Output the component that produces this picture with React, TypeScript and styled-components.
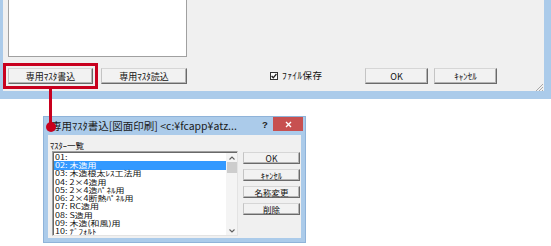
import { FC } from 'react';
import styled, { createGlobalStyle } from 'styled-components';

const GlobalStyle = createGlobalStyle`
  html, body {
    margin: 0;
    padding: 0;
    background: #ffffff;
  }
  body {
    font-family: 'Noto Sans CJK JP', 'Noto Sans', sans-serif;
    color: #000;
  }
  * {
    box-sizing: border-box;
  }
`;

const FRAME = '#abcbea';
const ANNOT = '#c8001e';

const items = [
  '01:',
  '02: 木造用',
  '03: 木造根太ﾚｽ工法用',
  '04: 2×4造用',
  '05: 2×4造ﾊﾟﾈﾙ用',
  '06: 2×4断熱ﾊﾟﾈﾙ用',
  '07: RC造用',
  '08: S造用',
  '09: 木造(和風)用',
  '10: ﾃﾞﾌｫﾙﾄ',
];

const App: FC = () => {
  return (
    <>
      <GlobalStyle />
      <Page>
        <MainWindow>
          <ListPane />
          <ButtonRow>
            <Highlight>
              <WinButton $w={85}>専用ﾏｽﾀ書込</WinButton>
            </Highlight>
            <WinButton $w={86} style={{ marginLeft: 3 }}>
              専用ﾏｽﾀ読込
            </WinButton>
            <CheckGroup>
              <CheckBox>
                <svg width="6" height="6" viewBox="0 0 6 6">
                  <path d="M0.6 3 L2.3 4.8 L5.4 1" fill="none" stroke="#222" strokeWidth="1.3" />
                </svg>
              </CheckBox>
              <SmallText>ﾌｧｲﾙ保存</SmallText>
            </CheckGroup>
            <RightGroup>
              <WinButton $w={63}>OK</WinButton>
              <WinButton $w={63}>ｷｬﾝｾﾙ</WinButton>
            </RightGroup>
          </ButtonRow>
          <Grip>
            <svg width="7" height="7" viewBox="0 0 7 7">
              <path d="M7 0 L0 7 M7 3 L3 7 M7 6 L6 7" stroke="#a8a8a8" strokeWidth="1" />
            </svg>
          </Grip>
        </MainWindow>

        <Connector />
        <Dot />

        <Dialog>
          <TitleBar>
            <TitleText>専用ﾏｽﾀ書込[図面印刷] &lt;c:¥fcapp¥atz...</TitleText>
            <Help>?</Help>
            <CloseButton>
              <svg width="7" height="7" viewBox="0 0 7 7">
                <path d="M1 1 L6 6 M6 1 L1 6" stroke="#fff" strokeWidth="1.4" />
              </svg>
            </CloseButton>
          </TitleBar>
          <Client>
            <Label>ﾏｽﾀｰ一覧</Label>
            <DialogBody>
              <ListBox>
                <Items>
                  {items.map((it, i) => (
                    <Item key={it} $selected={i === 1}>
                      <ItemText>{it}</ItemText>
                    </Item>
                  ))}
                </Items>
                <ScrollBar>
                  <Arrow>
                    <svg width="6" height="4" viewBox="0 0 6 4">
                      <path d="M0.5 3.5 L3 1 L5.5 3.5" fill="none" stroke="#606060" strokeWidth="1.1" />
                    </svg>
                  </Arrow>
                  <Thumb />
                  <Track />
                  <Arrow>
                    <svg width="6" height="4" viewBox="0 0 6 4">
                      <path d="M0.5 0.5 L3 3 L5.5 0.5" fill="none" stroke="#606060" strokeWidth="1.1" />
                    </svg>
                  </Arrow>
                </ScrollBar>
              </ListBox>
              <SideButtons>
                <DlgButton>OK</DlgButton>
                <DlgButton>ｷｬﾝｾﾙ</DlgButton>
                <DlgButton>名称変更</DlgButton>
                <DlgButton>削除</DlgButton>
              </SideButtons>
            </DialogBody>
          </Client>
        </Dialog>
      </Page>
    </>
  );
};

const Page = styled.div`
  position: relative;
  width: 551px;
  height: 246px;
  overflow: hidden;
  background: #fff;
  display: flex;
  flex-direction: column;
`;

const MainWindow = styled.div`
  position: relative;
  height: 99px;
  background: #f0f0f0;
  border-left: 3px solid ${FRAME};
  border-right: 7px solid ${FRAME};
  border-bottom: 8px solid ${FRAME};
  display: flex;
  flex-direction: column;
`;

const ListPane = styled.div`
  margin-left: 5px;
  width: 179px;
  height: 57px;
  background: #fff;
  border: 1px solid #a0a0a0;
  border-top: none;
`;

const ButtonRow = styled.div`
  margin-top: 6px;
  display: flex;
  align-items: center;
`;

const Highlight = styled.div`
  border: 3px solid ${ANNOT};
  padding: 2px;
  display: flex;
`;

const WinButton = styled.div<{ $w: number }>`
  width: ${(p) => p.$w}px;
  height: 16px;
  background: #f2f2f2;
  border-top: 1px solid #d6d6d6;
  border-left: 1px solid #c4c4c4;
  border-right: 1px solid #6a6a6a;
  border-bottom: 1px solid #6a6a6a;
  box-shadow: inset -1px -1px 0 #b4b4b4;
  display: flex;
  align-items: center;
  justify-content: center;
  font-size: 9px;
  line-height: 1;
  color: #111;
`;

const CheckGroup = styled.div`
  margin-left: 83px;
  display: flex;
  align-items: center;
  gap: 4px;
`;

const CheckBox = styled.div`
  width: 8px;
  height: 8px;
  background: #fff;
  border: 1px solid #333;
  display: flex;
  align-items: center;
  justify-content: center;
`;

const SmallText = styled.span`
  font-size: 9.5px;
  line-height: 1;
  letter-spacing: 0.4px;
  color: #111;
`;

const RightGroup = styled.div`
  margin-left: auto;
  margin-right: 47px;
  display: flex;
  gap: 6px;
`;

const Grip = styled.div`
  position: absolute;
  right: 1px;
  bottom: 0;
  width: 7px;
  height: 7px;
  display: flex;
`;

const Connector = styled.div`
  position: absolute;
  left: 49px;
  top: 89px;
  width: 3px;
  height: 36px;
  background: ${ANNOT};
  z-index: 2;
`;

const Dot = styled.div`
  position: absolute;
  left: 46px;
  top: 122px;
  width: 10px;
  height: 10px;
  border-radius: 50%;
  background: ${ANNOT};
  z-index: 2;
`;

const Dialog = styled.div`
  margin-top: 17px;
  margin-left: 43px;
  width: 263px;
  height: 127px;
  background: ${FRAME};
  border: 1px solid #8fb3d9;
  padding: 0 4px 4px 4px;
  display: flex;
  flex-direction: column;
`;

const TitleBar = styled.div`
  height: 18px;
  display: flex;
  align-items: flex-start;
`;

const TitleText = styled.div`
  margin-left: 3px;
  margin-top: 2px;
  font-size: 10.5px;
  line-height: 14px;
  color: #1a1a1a;
  white-space: nowrap;
  flex: 1;
`;

const Help = styled.div`
  margin-top: 2px;
  font-family: 'Liberation Sans', sans-serif;
  font-weight: bold;
  font-size: 9.5px;
  line-height: 12px;
  color: #222;
  width: 11px;
`;

const CloseButton = styled.div`
  width: 30px;
  height: 14px;
  margin-right: -2px;
  background: #c75050;
  display: flex;
  align-items: center;
  justify-content: center;
`;

const Client = styled.div`
  flex: 1;
  background: #f0f0f0;
  padding: 5px 0 0 2px;
  display: flex;
  flex-direction: column;
`;

const Label = styled.div`
  font-size: 8.5px;
  line-height: 10px;
  height: 11px;
  color: #111;
  white-space: nowrap;
`;

const DialogBody = styled.div`
  display: flex;
  padding-left: 2px;
  gap: 5px;
`;

const ListBox = styled.div`
  width: 186px;
  height: 85px;
  background: #fff;
  border-top: 1px solid #a0a0a0;
  border-left: 1px solid #a0a0a0;
  border-right: 1px solid #e3e3e3;
  border-bottom: 1px solid #e3e3e3;
  box-shadow: inset 1px 1px 0 #696969;
  display: flex;
  padding: 1px 0 0 1px;
`;

const Items = styled.div`
  flex: 1;
  display: flex;
  flex-direction: column;
`;

const Item = styled.div<{ $selected?: boolean }>`
  height: 8.3px;
  padding-left: 1px;
  display: flex;
  align-items: center;
  color: ${(p) => (p.$selected ? '#fff' : '#111')};
  background: ${(p) => (p.$selected ? '#3399ff' : 'transparent')};
`;

const ItemText = styled.span`
  display: inline-block;
  font-size: 9px;
  line-height: 9px;
  white-space: nowrap;
  transform: scaleY(0.82);
  transform-origin: left center;
`;

const ScrollBar = styled.div`
  width: 11px;
  background: #f4f4f4;
  display: flex;
  flex-direction: column;
  align-items: center;
`;

const Arrow = styled.div`
  height: 9px;
  width: 100%;
  display: flex;
  align-items: center;
  justify-content: center;
`;

const Thumb = styled.div`
  width: 10px;
  height: 11px;
  background: #cdcdcd;
`;

const Track = styled.div`
  flex: 1;
`;

const SideButtons = styled.div`
  display: flex;
  flex-direction: column;
  gap: 5px;
  padding-top: 1px;
`;

const DlgButton = styled.div`
  width: 57px;
  height: 12px;
  background: #f2f2f2;
  border-top: 1px solid #d6d6d6;
  border-left: 1px solid #c4c4c4;
  border-right: 1px solid #6a6a6a;
  border-bottom: 1px solid #6a6a6a;
  box-shadow: inset -1px -1px 0 #b4b4b4;
  display: flex;
  align-items: center;
  justify-content: center;
  font-size: 8.5px;
  line-height: 1;
  color: #111;
`;

export default App;
